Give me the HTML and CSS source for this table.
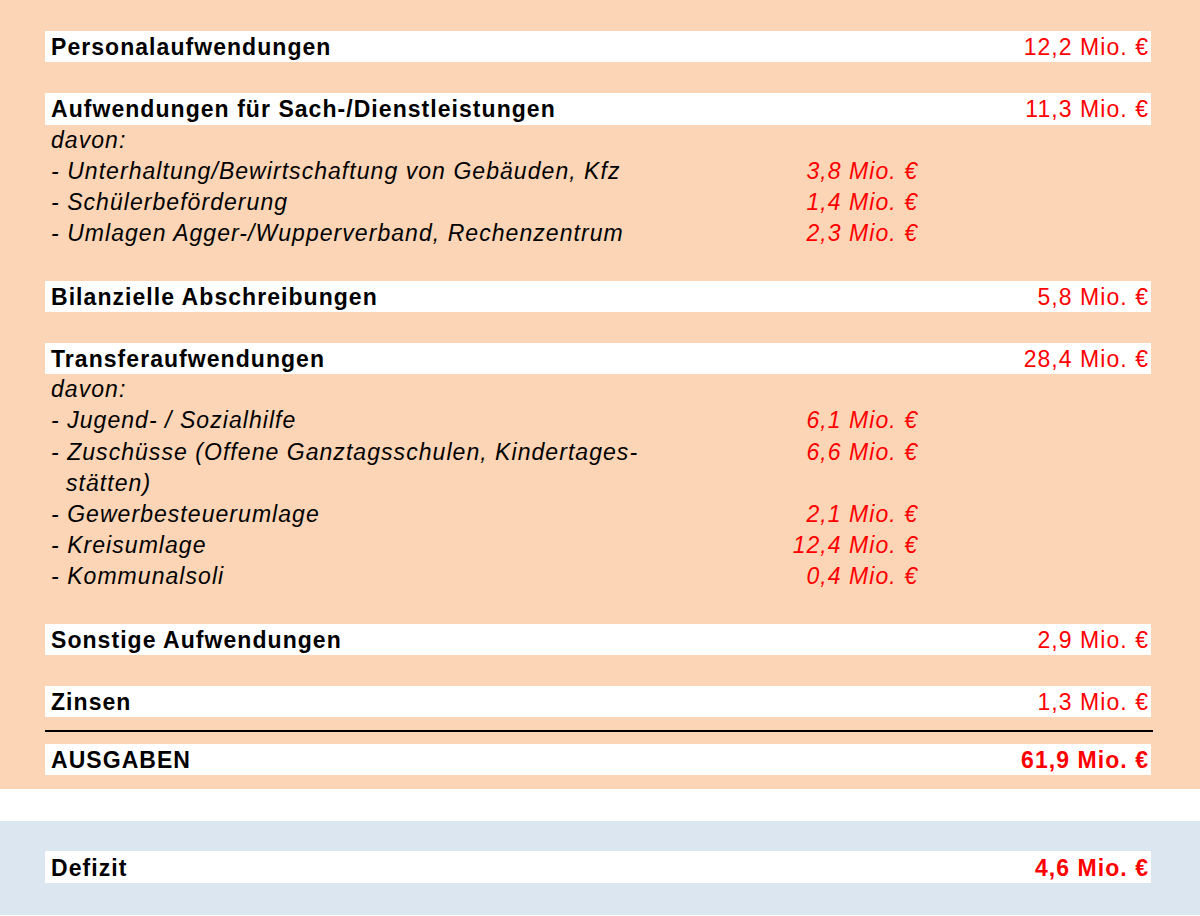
FILE: index.html
```html
<!DOCTYPE html>
<html lang="de">
<head>
<meta charset="utf-8">
<title>Ausgaben</title>
<link rel="stylesheet" href="styles.css">
</head>
<body>
<div class="sheet">
  <section class="block expenses">
    <div class="bar"><span class="label">Personalaufwendungen</span><span class="amount">12,2 Mio. €</span></div>
    <div class="spacer"></div>
    <div class="bar"><span class="label">Aufwendungen für Sach-/Dienstleistungen</span><span class="amount">11,3 Mio. €</span></div>
    <div class="note">davon:</div>
    <div class="sub"><span class="item">- Unterhaltung/Bewirtschaftung von Gebäuden, Kfz</span><span class="subamount">3,8 Mio. €</span></div>
    <div class="sub"><span class="item">- Schülerbeförderung</span><span class="subamount">1,4 Mio. €</span></div>
    <div class="sub"><span class="item">- Umlagen Agger-/Wupperverband, Rechenzentrum</span><span class="subamount">2,3 Mio. €</span></div>
    <div class="spacer"></div>
    <div class="bar"><span class="label">Bilanzielle Abschreibungen</span><span class="amount">5,8 Mio. €</span></div>
    <div class="spacer"></div>
    <div class="bar"><span class="label">Transferaufwendungen</span><span class="amount">28,4 Mio. €</span></div>
    <div class="note">davon:</div>
    <div class="sub"><span class="item">- Jugend- / Sozialhilfe</span><span class="subamount">6,1 Mio. €</span></div>
    <div class="sub"><span class="item">- Zuschüsse (Offene Ganztagsschulen, Kindertages-<br>stätten)</span><span class="subamount">6,6 Mio. €</span></div>
    <div class="sub"><span class="item">- Gewerbesteuerumlage</span><span class="subamount">2,1 Mio. €</span></div>
    <div class="sub"><span class="item">- Kreisumlage</span><span class="subamount">12,4 Mio. €</span></div>
    <div class="sub"><span class="item">- Kommunalsoli</span><span class="subamount">0,4 Mio. €</span></div>
    <div class="spacer"></div>
    <div class="bar"><span class="label">Sonstige Aufwendungen</span><span class="amount">2,9 Mio. €</span></div>
    <div class="spacer"></div>
    <div class="bar"><span class="label">Zinsen</span><span class="amount">1,3 Mio. €</span></div>
    <hr class="rule">
    <div class="bar total"><span class="label">AUSGABEN</span><span class="amount">61,9 Mio. €</span></div>
  </section>
  <section class="block deficit">
    <div class="bar total"><span class="label">Defizit</span><span class="amount">4,6 Mio. €</span></div>
  </section>
</div>
</body>
</html>
```

FILE: styles.css
```css
html, body {
  margin: 0;
  padding: 0;
  background: #ffffff;
}

.sheet {
  width: 1200px;
  font-family: "Liberation Sans", Arial, sans-serif;
  font-size: 23px;
  letter-spacing: 1.05px;
  color: #000000;
}

.block {
  display: flex;
  flex-direction: column;
  padding: 31px 49px 14px 45px;
}

.expenses {
  background: #fbd5b5;
}

.deficit {
  background: #dce6f1;
  margin-top: 32px;
  padding-top: 30px;
  padding-bottom: 32px;
}

.bar {
  display: flex;
  justify-content: space-between;
  align-items: center;
  box-sizing: border-box;
  height: 31.2px;
  background: #ffffff;
  padding: 2px 2px 0 6px;
}

.label {
  font-weight: bold;
}

.amount {
  color: #ff0000;
}

.total .amount {
  font-weight: bold;
}

.spacer {
  height: 31.2px;
}

.note {
  font-style: italic;
  line-height: 31.2px;
  padding-left: 6px;
}

.sub {
  display: flex;
  justify-content: space-between;
  align-items: flex-start;
  width: 867px;
  padding-left: 6px;
  font-style: italic;
  line-height: 31.2px;
}

.item {
  display: block;
  padding-left: 15px;
  text-indent: -15px;
}

.subamount {
  color: #ff0000;
}

.rule {
  margin: 13px 0 12px 0;
  width: 1108px;
  height: 2px;
  border: none;
  background: #000000;
}
```
